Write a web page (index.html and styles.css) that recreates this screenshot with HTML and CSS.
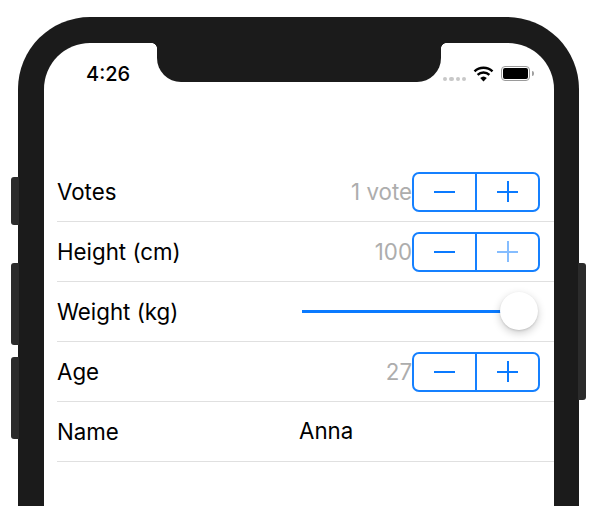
FILE: index.html
```html
<!DOCTYPE html>
<html lang="en">
<head>
    <meta charset="UTF-8">
    <meta name="viewport" content="width=device-width, initial-scale=1.0">
    <title>Form</title>
    <link rel="stylesheet" href="styles.css">
</head>
<body>
    <div class="phone">
        <span class="side-button left mute"></span>
        <span class="side-button left vol-up"></span>
        <span class="side-button left vol-down"></span>
        <span class="side-button right power"></span>

        <div class="screen">
            <div class="notch"></div>

            <div class="status-bar">
                <span class="time">4:26</span>
                <div class="status-icons">
                    <div class="signal-dots"><i></i><i></i><i></i><i></i></div>
                    <svg class="wifi" width="21" height="16" viewBox="0 0 21 16">
                        <path d="M10.5 15.5 L7.2 12 A4.8 4.8 0 0 1 13.8 12 Z" fill="#000"/>
                        <path d="M4.6 8.9 A8.6 8.6 0 0 1 16.4 8.9" fill="none" stroke="#000" stroke-width="2.4"/>
                        <path d="M1.5 5.4 A13 13 0 0 1 19.5 5.4" fill="none" stroke="#000" stroke-width="2.4"/>
                    </svg>
                    <div class="battery"><div class="battery-level"></div></div>
                    <span class="battery-nub"></span>
                </div>
            </div>

            <div class="form">
                <div class="row">
                    <span class="label">Votes</span>
                    <span class="value">1 vote</span>
                    <div class="stepper">
                        <button class="step"><span class="minus"></span></button>
                        <button class="step"><span class="plus"></span></button>
                    </div>
                </div>
                <div class="row">
                    <span class="label">Height (cm)</span>
                    <span class="value">100</span>
                    <div class="stepper">
                        <button class="step"><span class="minus"></span></button>
                        <button class="step disabled"><span class="plus"></span></button>
                    </div>
                </div>
                <div class="row">
                    <span class="label">Weight (kg)</span>
                    <div class="slider">
                        <div class="slider-track"></div>
                        <div class="slider-thumb"></div>
                    </div>
                </div>
                <div class="row">
                    <span class="label">Age</span>
                    <span class="value">27</span>
                    <div class="stepper">
                        <button class="step"><span class="minus"></span></button>
                        <button class="step"><span class="plus"></span></button>
                    </div>
                </div>
                <div class="row">
                    <span class="label">Name</span>
                    <span class="name-value">Anna</span>
                </div>
            </div>
        </div>
    </div>
</body>
</html>
```

FILE: styles.css
```css
* {
    margin: 0;
    padding: 0;
    box-sizing: border-box;
}

html, body {
    height: 506px;
    overflow: hidden;
}

body {
    font-family: Inter, "Liberation Sans", sans-serif;
    background: white;
    padding: 17px 21px 0 18px;
}

/* phone is cut off by the bottom of the window, so no bottom corners */
.phone {
    position: relative;
    height: 489px;
    background: #1b1b1b;
    border-radius: 72px 72px 0 0;
    padding: 26px 25px 0 26px;
}

.side-button {
    position: absolute;
    width: 8px;
    background: #2b2b2b;
}

.side-button.left {
    left: -7px;
    border-radius: 3px 0 0 3px;
}

.side-button.right {
    right: -7px;
    border-radius: 0 3px 3px 0;
}

.mute {
    top: 160px;
    height: 48px;
}

.vol-up {
    top: 246px;
    height: 82px;
}

.vol-down {
    top: 340px;
    height: 82px;
}

.power {
    top: 246px;
    height: 137px;
}

.screen {
    position: relative;
    height: 100%;
    background: white;
    border-radius: 46px 46px 0 0;
}

.notch {
    position: absolute;
    top: -1px;
    left: 113px;
    width: 284px;
    height: 40px;
    background: #1b1b1b;
    border-radius: 0 0 24px 24px;
}

/* small flared corners where the notch meets the top of the screen */
.notch::before, .notch::after {
    content: "";
    position: absolute;
    top: 1px;
    width: 5px;
    height: 5px;
}

.notch::before {
    left: -5px;
    background: radial-gradient(circle at 0 100%, transparent 4.5px, #1b1b1b 5px);
}

.notch::after {
    right: -5px;
    background: radial-gradient(circle at 100% 100%, transparent 4.5px, #1b1b1b 5px);
}

.status-bar {
    height: 119px;
    padding: 20px 20px 0 42px;
    display: flex;
    justify-content: space-between;
    align-items: flex-start;
}

.time {
    font-size: 20px;
    font-weight: 500;
    line-height: 22px;
    color: #000;
}

.status-icons {
    display: flex;
    align-items: flex-start;
    margin-top: 3px;
}

.signal-dots {
    display: flex;
    gap: 2px;
    margin-top: 11px;
    margin-right: 7px;
}

.signal-dots i {
    width: 4.25px;
    height: 4.25px;
    border-radius: 50%;
    background: #c8c8c8;
}

.wifi {
    margin-right: 7px;
}

.battery {
    width: 29px;
    height: 15px;
    border: 1px solid #9a9a9a;
    border-radius: 4px;
    padding: 1px;
}

.battery-level {
    height: 100%;
    background: #000;
    border-radius: 2px;
}

.battery-nub {
    width: 2px;
    height: 5px;
    margin: 5px 0 0 2px;
    background: #a0a0a0;
    border-radius: 0 2px 2px 0;
}

.form {
    padding-left: 13px;
}

.row {
    height: 60px;
    display: flex;
    align-items: center;
    padding-right: 14px;
    border-bottom: 1px solid #e0e0e0;
}

.label {
    flex: 1;
    font-size: 22.3px;
    color: #000;
}

.value {
    font-size: 22.3px;
    color: #adadad;
}

.stepper {
    display: flex;
    width: 128px;
    height: 40px;
    border: 2px solid #1580ff;
    border-radius: 7px;
}

.step {
    flex: 1;
    display: flex;
    align-items: center;
    justify-content: center;
    background: none;
    border: none;
}

.step + .step {
    border-left: 2px solid #1580ff;
}

.minus, .plus {
    position: relative;
    display: block;
    width: 21px;
    height: 2px;
    background: #0a7aff;
}

.plus::after {
    content: "";
    position: absolute;
    left: 9.5px;
    top: -9.5px;
    width: 2px;
    height: 21px;
    background: #0a7aff;
}

.disabled .plus, .disabled .plus::after {
    background: #85bdff;
}

.slider {
    width: 236px;
    height: 38px;
    margin-right: 2px;
    display: flex;
    align-items: center;
}

.slider-track {
    flex: 1;
    height: 2.5px;
    background: #0a7aff;
}

.slider-thumb {
    width: 38px;
    height: 38px;
    margin: 0 0 2px -4px;
    border-radius: 50%;
    background: white;
    box-shadow: 0 3px 8px rgba(0, 0, 0, 0.2), 0 1px 2px rgba(0, 0, 0, 0.12);
}

.name-value {
    width: 241px;
    font-size: 22.3px;
    color: #000;
    margin-bottom: 3px;
}
```
